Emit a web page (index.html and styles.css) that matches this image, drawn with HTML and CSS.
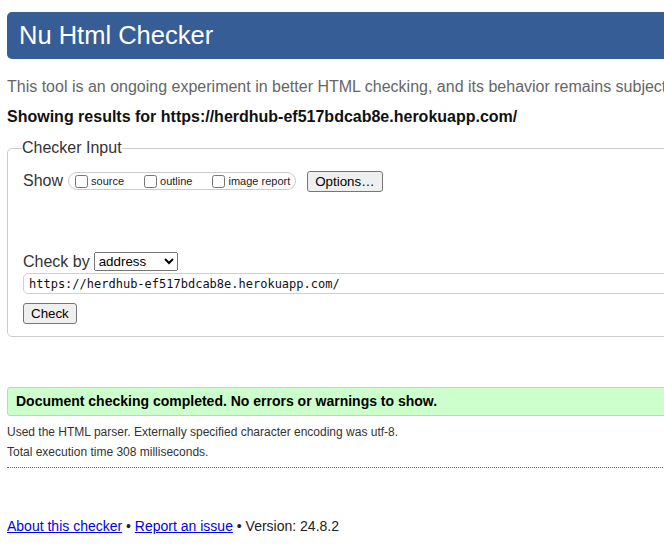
FILE: index.html
```html
<!DOCTYPE html>
<html lang="en">
<head>
<meta charset="utf-8">
<title>Nu Html Checker</title>
<link rel="stylesheet" href="styles.css">
</head>
<body>
<div class="page">
  <h1 class="title">Nu Html Checker</h1>
  <p class="intro">This tool is an ongoing experiment in better HTML checking, and its behavior remains subject to change</p>
  <p class="results-for">Showing results for https://herdhub-ef517bdcab8e.herokuapp.com/</p>

  <form class="checker-form">
    <fieldset class="checker-input">
      <legend class="checker-legend">Checker Input</legend>
      <div class="show-row">
        <span class="label-text">Show</span>
        <span class="show-pill">
          <label class="show-opt"><input type="checkbox" class="cb"><span>source</span></label>
          <label class="show-opt"><input type="checkbox" class="cb"><span>outline</span></label>
          <label class="show-opt"><input type="checkbox" class="cb"><span>image report</span></label>
        </span>
        <button type="button" class="btn">Options…</button>
      </div>
      <div class="checkby-row">
        <span class="label-text">Check by</span>
        <select class="sel"><option>address</option></select>
      </div>
      <input type="text" class="url-input" value="https://herdhub-ef517bdcab8e.herokuapp.com/">
      <div class="submit-row"><button type="button" class="btn">Check</button></div>
    </fieldset>
  </form>

  <p class="success">Document checking completed. No errors or warnings to show.</p>
  <p class="details">Used the HTML parser. Externally specified character encoding was utf-8.</p>
  <p class="details">Total execution time 308 milliseconds.</p>
  <hr class="dotted">

  <p class="footer"><a href="#">About this checker</a> • <a href="#">Report an issue</a> • Version: 24.8.2</p>
</div>
</body>
</html>
```

FILE: styles.css
```css
html {
  overflow: hidden;
  background: #fff;
}

body {
  margin: 0;
  font-family: "Liberation Sans", Arial, sans-serif;
  color: #222;
}

.page {
  width: 1000px;
  padding: 12px 0 0 7px;
}

.title {
  margin: 0;
  height: 47px;
  line-height: 47px;
  padding-left: 12px;
  background: #365d95;
  color: #fff;
  font-size: 25.5px;
  font-weight: normal;
  border-radius: 5px 0 0 5px;
}

.intro {
  margin: 19px 0 0;
  font-size: 16px;
  line-height: 18px;
  color: #666;
  white-space: nowrap;
}

.results-for {
  margin: 12px 0 0;
  font-size: 16px;
  line-height: 18px;
  font-weight: bold;
  color: #111;
  white-space: nowrap;
}

.checker-form {
  margin: 13px 0 0;
}

.checker-input {
  margin: 0;
  padding: 14px 15px 12px 15px;
  border: 1px solid #ccc;
  border-radius: 5px 0 0 5px;
}

.checker-legend {
  padding: 0;
  margin-left: -1px;
  font-size: 16px;
  line-height: 18px;
  color: #333;
}

.label-text {
  font-size: 16px;
  line-height: 18px;
  color: #333;
}

.show-row {
  display: flex;
  align-items: center;
  height: 20px;
}

.show-pill {
  display: inline-flex;
  align-items: center;
  gap: 20px;
  height: 16px;
  margin-left: 5px;
  padding: 0 5px 0 6px;
  border: 1px solid #ccc;
  border-radius: 9px;
}

.show-opt {
  display: inline-flex;
  align-items: center;
  font-size: 11px;
  color: #222;
}

.cb {
  width: 13px;
  height: 13px;
  margin: 0 3px 0 0;
}

.btn {
  margin-left: 11px;
  font-family: "Liberation Sans", Arial, sans-serif;
  font-size: 13.333px;
  height: 21px;
  padding: 1px 7px;
  color: #000;
  background: #efefef;
  border: 1px solid #767676;
  border-radius: 3px;
}

.checkby-row {
  display: flex;
  align-items: center;
  margin-top: 61px;
  height: 19px;
}

.sel {
  margin-left: 4px;
  width: 84px;
  height: 19px;
  font-family: "Liberation Sans", Arial, sans-serif;
  font-size: 13.333px;
  color: #000;
}

.url-input {
  display: block;
  box-sizing: border-box;
  margin: 2px 0 0;
  width: 900px;
  height: 21px;
  padding: 0 5px;
  font-family: "DejaVu Sans Mono", "Liberation Mono", monospace;
  font-size: 12px;
  color: #111;
  border: 1px solid #d0d0d0;
  border-radius: 5px;
  outline: none;
}

.submit-row {
  margin-top: 9px;
  display: flex;
}

.submit-row .btn {
  margin-left: 0;
}

.success {
  margin: 50px 0 0;
  padding: 5px 8px;
  font-size: 14px;
  line-height: 17px;
  font-weight: bold;
  color: #000;
  background: #ccffcc;
  border: 1px solid #ccc;
  border-radius: 3px 0 0 3px;
}

.details {
  margin: 0;
  font-size: 12px;
  line-height: 20px;
  color: #333;
}

.success + .details {
  margin-top: 6px;
}

.dotted {
  margin: 5px 0 0;
  height: 0;
  border: 0;
  border-top: 1px dotted #666;
}

.footer {
  margin: 50px 0 0;
  font-size: 14px;
  line-height: 16px;
  color: #222;
}

.footer a {
  color: #0000ee;
}
```
